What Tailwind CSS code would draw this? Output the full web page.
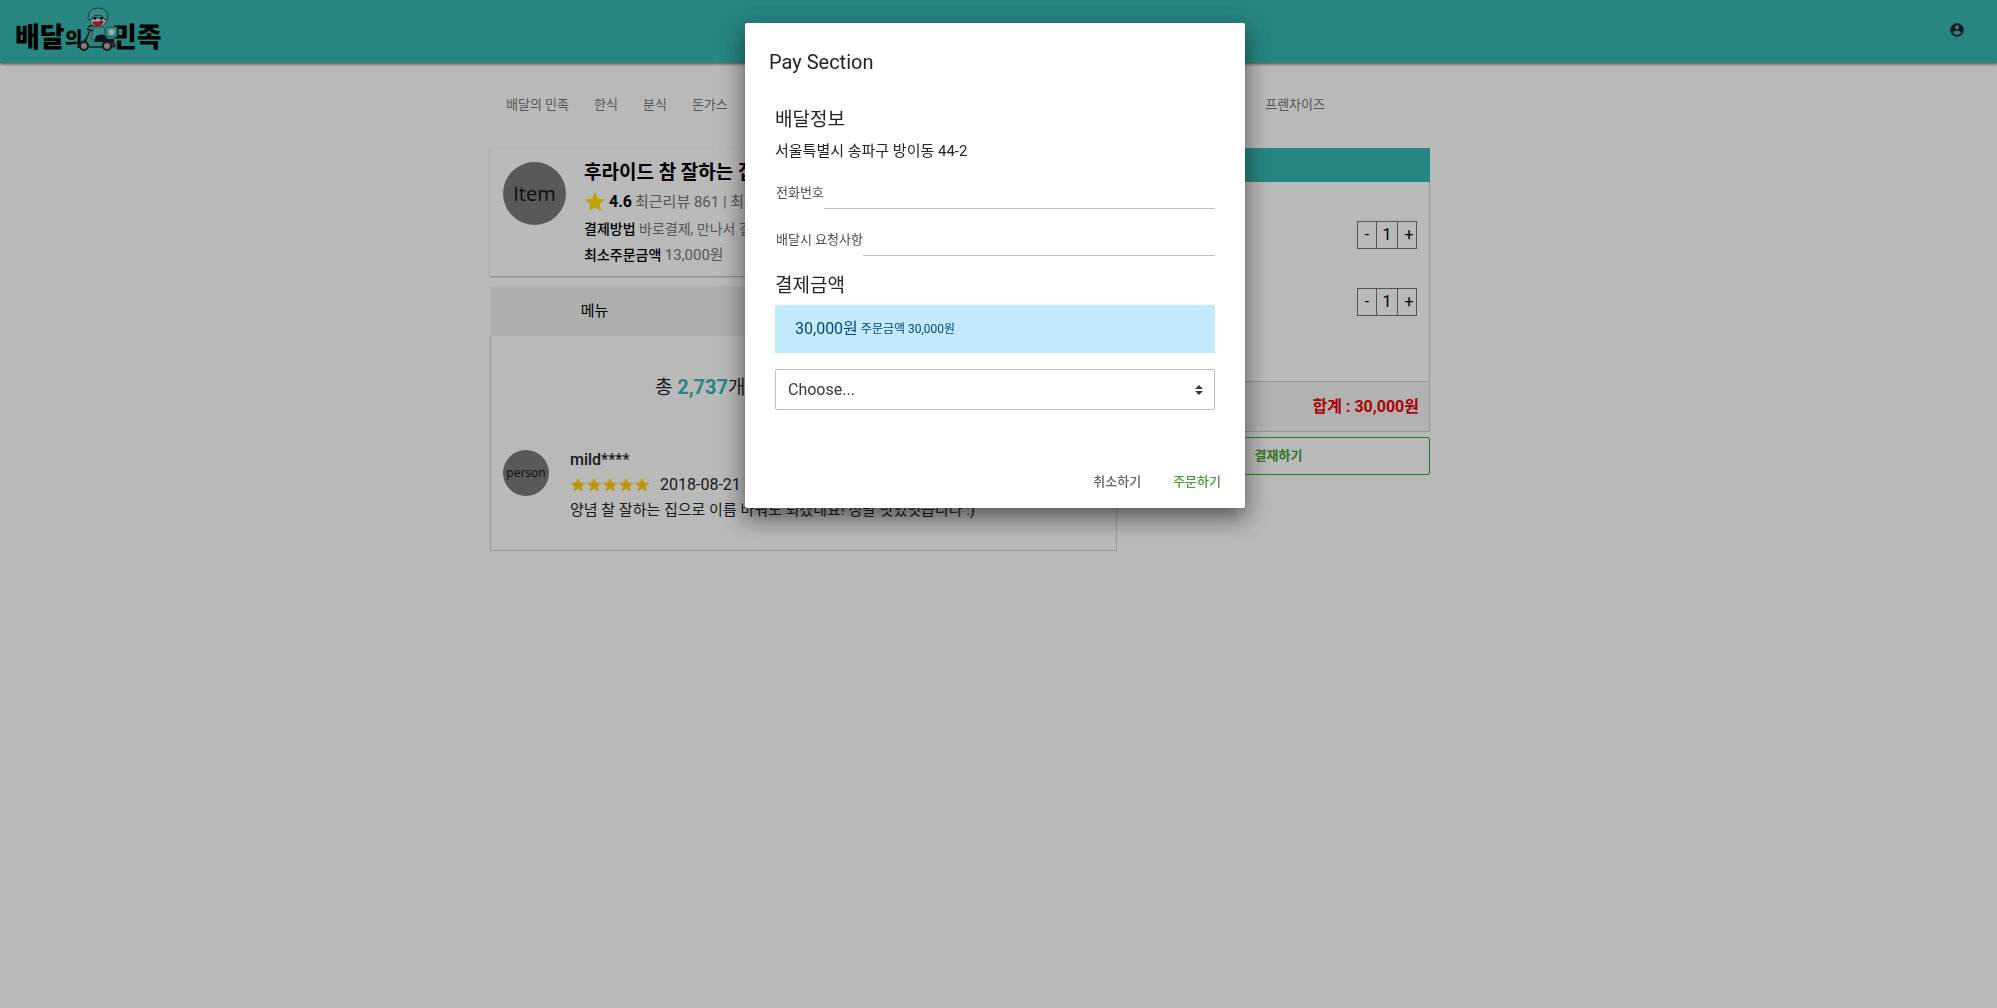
<!DOCTYPE html>
<html lang="ko">
<head>
<meta charset="utf-8">
<meta name="viewport" content="width=device-width, initial-scale=1">
<title>배달의민족</title>
<script src="https://cdn.jsdelivr.net/npm/@tailwindcss/browser@4"></script>
</head>
<body class="min-h-screen bg-[#fafafa] font-['Roboto','Noto_Sans_CJK_KR',sans-serif] text-[15px] leading-6 text-[#212529]">
<svg class="hidden" aria-hidden="true">
  <symbol id="star" viewBox="1 1 22 22"><path d="M12 17.27 18.18 21l-1.64-7.03L22 9.24l-7.19-.61L12 2 9.19 8.63 2 9.24l5.46 4.73L5.82 21z"/></symbol>
</svg>

<header class="flex h-[63px] items-center justify-between bg-[#35b5ad] pr-8 pl-[15px] shadow-[0_1px_3px_rgba(0,0,0,0.6)]">
  <a href="#" aria-label="배달의민족">
    <svg class="mb-1 h-12 w-[150px]" viewBox="0 0 150 48" font-family="'Noto Sans CJK KR', sans-serif" font-weight="900" stroke-linejoin="round">
      <g fill="#000">
        <text x="0" y="41" font-size="27">배달</text>
        <text x="50" y="40" font-size="19">의</text>
        <text x="97" y="41" font-size="27">민족</text>
      </g>
      <rect x="91" y="21" width="11" height="10" rx="1" fill="#48bdb5" stroke="#247c78"/>
      <circle cx="96.500" cy="26" r="3" fill="#cfe8e5"/>
      <path d="M79 21q7-3 11 2l-2 9-12 2 1-6z" fill="#48bdb5" stroke="#247c78"/>
      <path d="M81 30q5-3 10 0l2 6H79z" fill="#171c20"/>
      <path d="M75 24l-4 8-5 6q5-3 8 3h13l2-5h9q3 1 2 5H74l-3-6 3-8z" fill="#4b3a3a" stroke="#282525"/>
      <path d="M82 33h17v3H82z" fill="#171c20"/>
      <path d="M72 23l6 2m-5-4 5-2" fill="none" stroke="#222" stroke-width="1.500"/>
      <circle cx="69" cy="40" r="4" fill="#aaa" stroke="#252525" stroke-width="2"/>
      <circle cx="92" cy="40" r="4" fill="#aaa" stroke="#252525" stroke-width="2"/>
      <path d="M75 12q0 8 7 9 8 1 10-9z" fill="#ead8d5" stroke="#333" stroke-width=".8"/>
      <path d="M78 16q5 1 10-1-1 5-5 5-4 0-5-4" fill="#d82c38" stroke="#751c22"/>
      <path d="M73 13Q73 2 83 2t10 11l-3 1q-2-5-7-5t-6 5z" fill="#48bdb5" stroke="#254f50"/>
      <path d="M79 12l2 1m4 0 3-1" stroke="#111" stroke-width="2"/>
    </svg>
  </a>
  <button type="button" aria-label="내 계정" class="mb-1">
    <svg class="size-4" viewBox="0 0 24 24" fill="#212529"><path d="M12 2C6.480 2 2 6.480 2 12s4.480 10 10 10 10-4.480 10-10S17.520 2 12 2zm0 3c1.660 0 3 1.340 3 3s-1.340 3-3 3-3-1.340-3-3 1.340-3 3-3zm0 14.200c-2.500 0-4.710-1.280-6-3.220.030-1.990 4-3.080 6-3.080 1.990 0 5.970 1.090 6 3.080-1.290 1.940-3.500 3.220-6 3.220z"/></svg>
  </button>
</header>

<div class="max-w-[1920px]">
<div class="mx-auto max-w-[940px] pt-6">
  <nav class="flex h-9 items-center justify-between pr-[105px] pl-4 text-[13px] text-[#757575]">
    <div class="flex gap-[25px]">
      <a href="#">배달의 민족</a><a href="#">한식</a><a href="#">분식</a><a href="#">돈가스</a>
    </div>
    <a href="#">프렌차이즈</a>
  </nav>

  <div class="mt-[25px] flex gap-[10px]">
    <main class="min-w-0 grow">
      <section class="flex h-32 gap-[18px] rounded-xs pt-[10px] pl-[13px] shadow-[0_1px_2px_rgba(0,0,0,0.3)]">
        <div class="mt-1 flex size-[63px] shrink-0 items-center justify-center rounded-full bg-[#797979] font-['Open_Sans'] text-xl text-[#111]">Item</div>
        <div class="overflow-hidden text-[14px] whitespace-nowrap text-[#757575]">
          <h1 class="h-[30px] text-[19px] leading-[30px] font-bold text-black">후라이드 참 잘하는 집</h1>
          <p class="flex h-7 items-center gap-[3px] text-[15px]"><svg class="size-[22px] fill-[#ffdd00]"><use href="#star"/></svg><b class="text-base text-black">4.6</b><span>최근리뷰 861 | 최근</span></p>
          <p class="h-[26px] leading-[26px]"><b class="font-medium text-black">결제방법</b> 바로결제, 만나서 결제</p>
          <p class="h-[26px] leading-[26px]"><b class="font-medium text-black">최소주문금액</b> <span class="text-[15px]">13,000원</span></p>
        </div>
      </section>

      <div class="mt-[10px] grid h-[50px] grid-cols-3 bg-[#ebebeb] text-black">
        <button type="button">메뉴</button><button type="button">클린리뷰</button><button type="button">정보</button>
      </div>
      <section class="h-[215px] border border-t-0 border-[#ccc] pt-9">
        <h2 class="pl-[164px] text-[19px] leading-8 text-[#212529]">총 <b class="text-xl text-[#35b5ad]">2,737</b>개의 리뷰</h2>
        <article class="mt-14 flex gap-[21px] pl-3">
          <div class="-mt-[10px] flex size-[46px] shrink-0 items-center justify-center rounded-full bg-[#797979] font-['Open_Sans'] text-[12px] font-medium text-[#111]">person</div>
          <div class="-mt-3">
            <p class="text-base leading-6 font-medium">mild****</p>
            <p class="flex h-[26px] items-center text-base"><span class="mr-[10px] flex" role="img" aria-label="별점 5점"><svg class="size-4 fill-[#ffcc00]"><use href="#star"/></svg><svg class="size-4 fill-[#ffcc00]"><use href="#star"/></svg><svg class="size-4 fill-[#ffcc00]"><use href="#star"/></svg><svg class="size-4 fill-[#ffcc00]"><use href="#star"/></svg><svg class="size-4 fill-[#ffcc00]"><use href="#star"/></svg></span>2018-08-21</p>
            <p>양념 찰 잘하는 집으로 이름 바꿔도 되겠네요! 정말 맛있엇습니다 :)</p>
          </div>
        </article>
      </section>
    </main>

    <aside class="w-[303px] shrink-0">
      <div class="h-[34px] bg-[#35b5ad]"></div>
      <div class="flex h-[199px] flex-col items-end gap-[39px] border-x border-[#ccc] pt-[39px] pr-3">
        <div class="grid h-7 w-[60px] grid-cols-[19px_21px_18px] divide-x divide-[#737373] border border-[#737373] text-base leading-[26px] text-black">
          <button type="button">-</button><span class="text-center">1</span><button type="button" class="pl-1">+</button>
        </div>
        <div class="grid h-7 w-[60px] grid-cols-[19px_21px_18px] divide-x divide-[#737373] border border-[#737373] text-base leading-[26px] text-black">
          <button type="button">-</button><span class="text-center">1</span><button type="button" class="pl-1">+</button>
        </div>
      </div>
      <p class="flex h-[51px] items-center justify-end border border-[#ccc] bg-[#f0f0f0] pr-[10px] text-base font-bold text-[#e60000]">합계 : 30,000원</p>
      <button type="button" class="mt-[5px] h-[38px] w-full rounded-xs border border-[#43a02f] text-[13px] font-bold text-[#43a02f]">결재하기</button>
    </aside>
  </div>
</div>
</div>

<div class="fixed inset-0 bg-black/26"></div>
<div class="fixed inset-0 overflow-y-auto pr-[23px] pl-4">
  <form role="dialog" aria-modal="true" aria-labelledby="pay-title" class="mx-auto mt-[23px] mb-8 max-w-[500px] rounded-xs bg-white shadow-[0_11px_15px_-7px_rgba(0,0,0,0.2),0_9px_24px_3px_rgba(0,0,0,0.42)]">
    <h2 id="pay-title" class="px-6 pt-6 text-xl leading-[30px]">Pay Section</h2>
    <div class="px-[30px] pt-7">
      <h3 class="text-[19px] leading-[30px]">배달정보</h3>
      <p class="h-8 leading-8">서울특별시 송파구 방이동 44-2</p>
      <div class="mt-[10px] flex h-8 items-stretch text-[13px] text-[#495057]">
        <label for="phone" class="pl-px leading-8">전화번호</label>
        <input id="phone" type="tel" class="min-w-0 grow border-b border-[#bdbdbd] bg-transparent outline-none">
      </div>
      <div class="mt-[15px] flex h-8 items-stretch text-[13px] text-[#495057]">
        <label for="request" class="pl-px leading-8">배달시 요청사항</label>
        <input id="request" type="text" class="min-w-0 grow border-b border-[#bdbdbd] bg-transparent outline-none">
      </div>
      <h3 class="mt-[15px] text-[19px] leading-[30px]">결제금액</h3>
      <p class="mt-1 flex h-12 items-center gap-[3px] bg-[#c3e9fd] px-5 text-[#014a77]"><span class="text-base">30,000원</span> <small class="text-[12px]">주문금액 30,000원</small></p>
      <div class="relative mt-4">
        <select aria-label="결제수단" class="block h-[41px] w-full appearance-none rounded-xs border border-[#bdbdbd] bg-white px-3 text-base text-[#343a40]">
          <option>Choose...</option>
        </select>
        <svg class="pointer-events-none absolute top-4 right-3 h-[10px] w-2" viewBox="0 0 8 10" fill="#343a40"><path d="M0 4 4 0l4 4zM0 6h8l-4 4z"/></svg>
      </div>
    </div>
    <div class="mt-[54px] flex justify-end px-2 pb-2 text-[13px] font-medium">
      <button type="button" class="h-9 px-4 text-[#5f6368]">취소하기</button>
      <button type="submit" class="h-9 px-4 text-[#43a02f]">주문하기</button>
    </div>
  </form>
</div>
</body>
</html>
